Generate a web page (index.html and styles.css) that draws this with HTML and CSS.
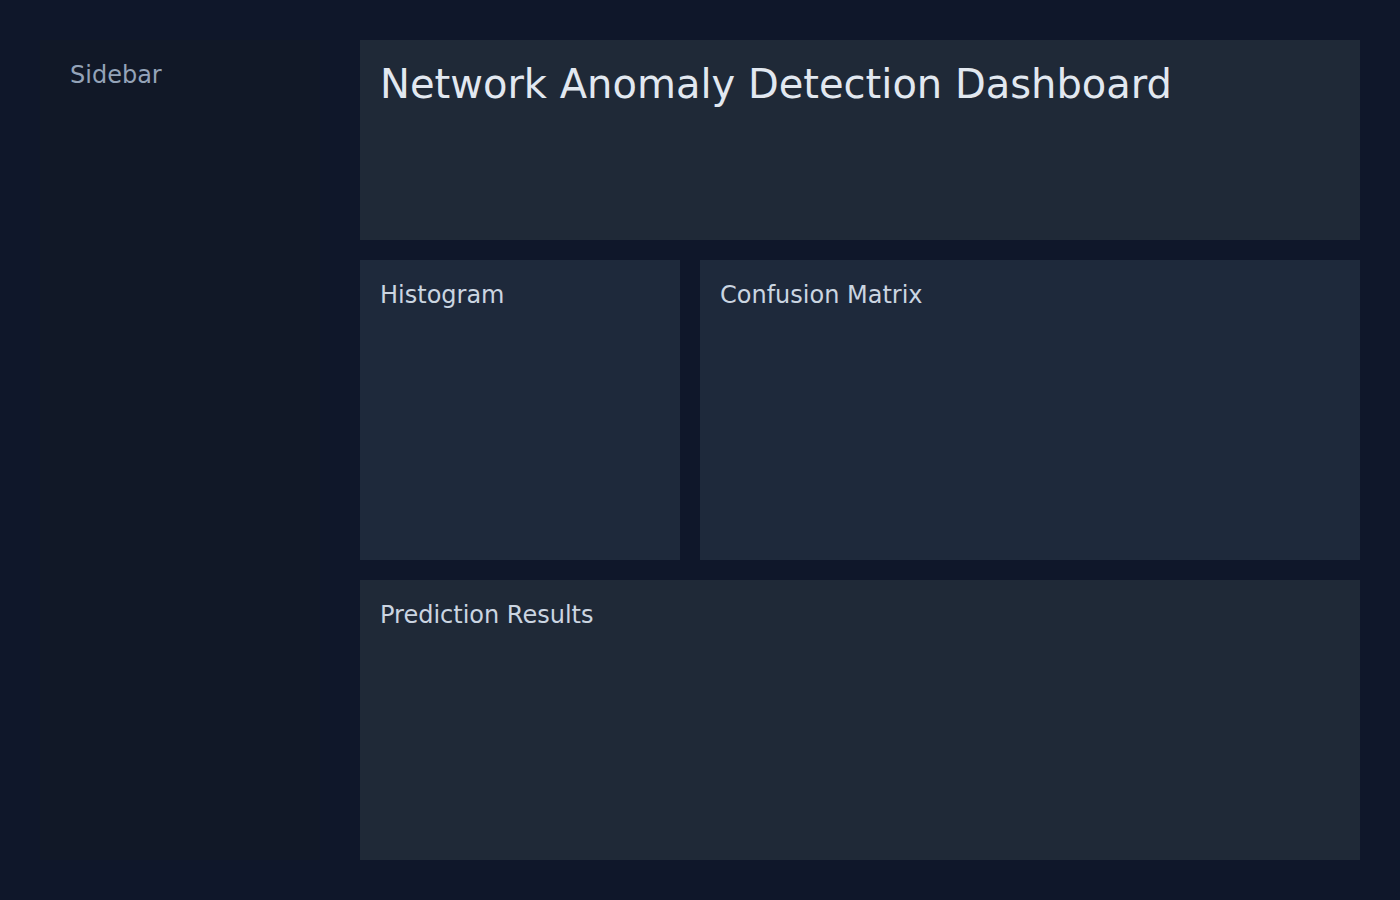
FILE: index.html
```html
<!DOCTYPE html>
<html lang="en">
<head>
<meta charset="utf-8">
<title>Network Anomaly Detection Dashboard</title>
<link rel="stylesheet" href="styles.css">
</head>
<body>
  <div class="layout">
    <aside class="sidebar">
      <div class="sidebar-title">Sidebar</div>
    </aside>
    <main class="main">
      <section class="panel header">
        <h1 class="title">Network Anomaly Detection Dashboard</h1>
      </section>
      <div class="row">
        <section class="panel chart">
          <h2 class="panel-title">Histogram</h2>
        </section>
        <section class="panel chart">
          <h2 class="panel-title">Confusion Matrix</h2>
        </section>
      </div>
      <section class="panel results">
        <h2 class="panel-title">Prediction Results</h2>
      </section>
    </main>
  </div>
</body>
</html>
```

FILE: styles.css
```css
* { box-sizing: border-box; }
html, body { margin: 0; padding: 0; }
body {
  background: #0f172a;
  font-family: "DejaVu Sans", sans-serif;
  width: 1400px;
  height: 900px;
  overflow: hidden;
}
.layout {
  display: flex;
  gap: 40px;
  padding: 40px;
  height: 900px;
}
.sidebar {
  width: 280px;
  flex: none;
  background: #111827;
  padding: 20px 30px;
}
.sidebar-title {
  color: #94a3b8;
  font-size: 24px;
  line-height: 1.3;
}
.main {
  flex: 1;
  display: flex;
  flex-direction: column;
  gap: 20px;
}
.panel {
  padding: 20px;
}
.header {
  height: 200px;
  background: #1f2937;
}
.title {
  margin: 0;
  font-size: 40px;
  line-height: 1.2;
  font-weight: normal;
  color: #e2e8f0;
}
.row {
  display: grid;
  grid-template-columns: 320px 1fr;
  gap: 20px;
  height: 300px;
}
.chart { background: #1e293b; }
.results {
  height: 280px;
  background: #1f2937;
}
.panel-title {
  margin: 0;
  font-size: 24px;
  line-height: 1.3;
  font-weight: normal;
  color: #cbd5e1;
}
```
